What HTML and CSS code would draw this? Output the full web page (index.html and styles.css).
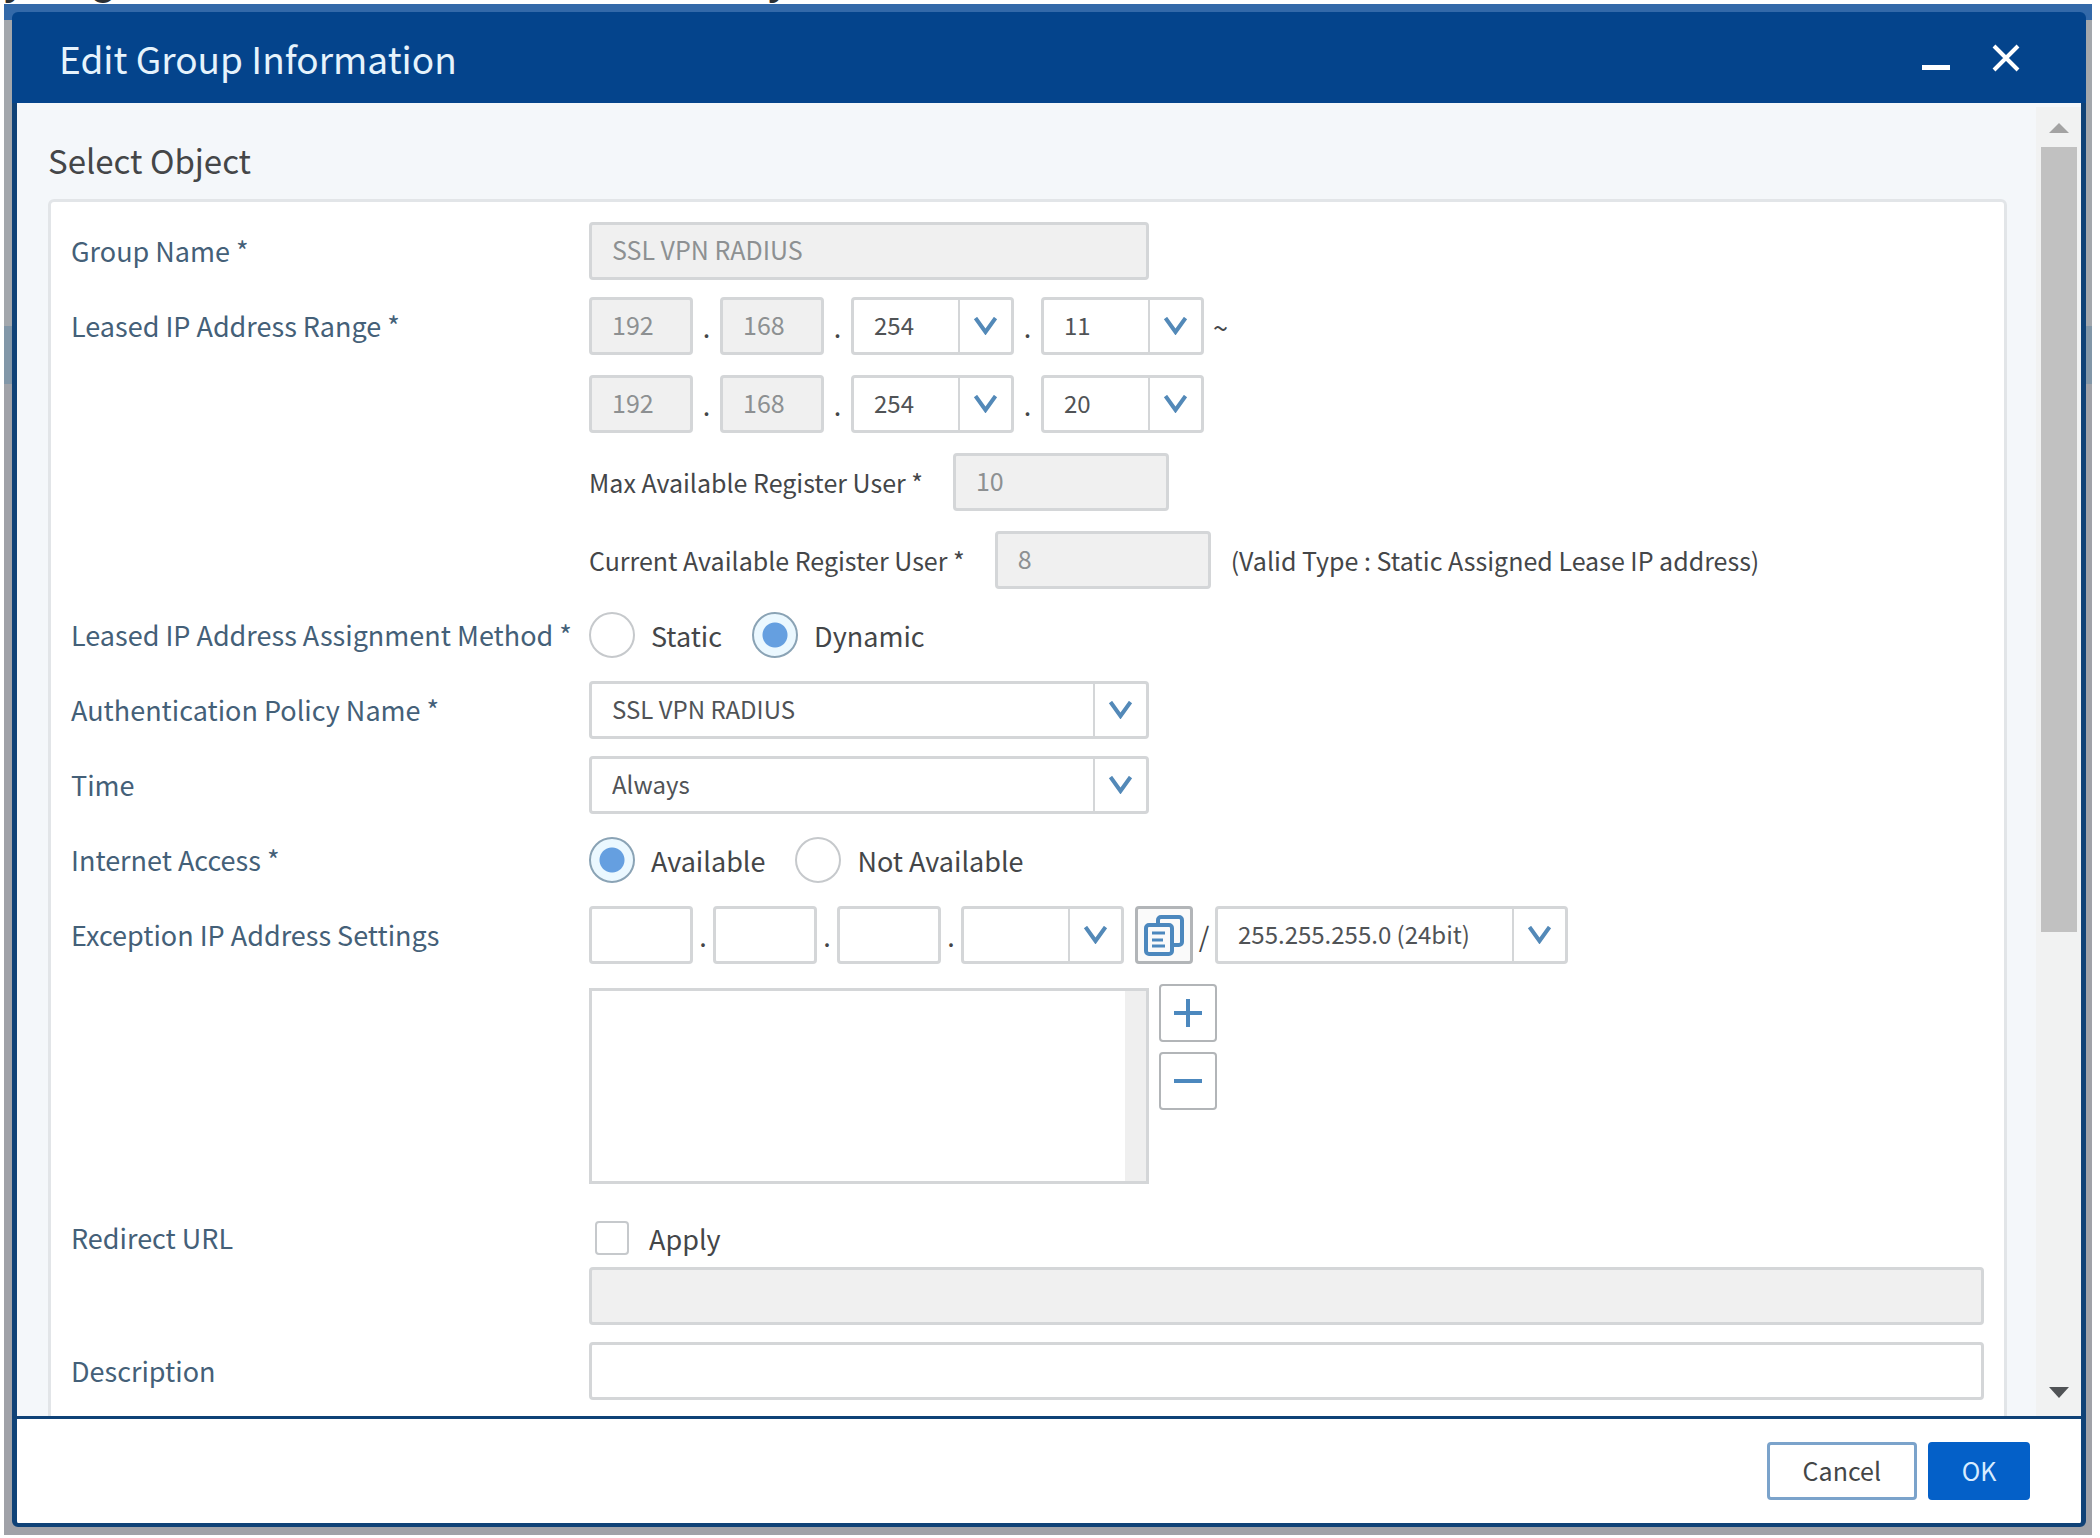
FILE: index.html
```html
<!DOCTYPE html>
<html lang="en">
<head>
    <meta charset="UTF-8">
    <meta name="viewport" content="width=device-width, initial-scale=1.0">
    <title>Edit Group Information</title>
    <link rel="stylesheet" href="styles.css">
</head>
<body>
    <svg class="sprite" aria-hidden="true">
        <symbol id="chevron" viewBox="0 0 24 18">
            <path d="M2 1 L12 15 L22 1" fill="none" stroke="currentColor" stroke-width="4"/>
        </symbol>
    </svg>

    <!-- Last line of the page text, scrolled almost out of view -->
    <div class="page-text" aria-hidden="true"><span>y</span><span>g</span><span>y</span></div>

    <div class="backdrop">
        <div class="dialog" role="dialog" aria-labelledby="dialogTitle">
            <header class="dialog-header">
                <h1 id="dialogTitle" class="dialog-title">Edit Group Information</h1>
                <div class="window-buttons">
                    <button type="button" class="window-button" aria-label="Minimize">
                        <svg width="28" height="28" viewBox="0 0 28 28"><path d="M0 23.5h28" stroke="currentColor" stroke-width="5"/></svg>
                    </button>
                    <button type="button" class="window-button" aria-label="Close">
                        <svg width="28" height="28" viewBox="0 0 28 28"><path d="M2 2l24 24M26 2L2 26" stroke="currentColor" stroke-width="4"/></svg>
                    </button>
                </div>
            </header>

            <div class="dialog-body">
                <main class="content">
                    <h2 class="section-title">Select Object</h2>
                    <form class="panel" id="groupForm">
                        <div class="row">
                            <label class="row-label" for="groupName">Group Name *</label>
                            <input class="field field-wide" id="groupName" type="text" value="SSL VPN RADIUS" disabled>
                        </div>

                        <div class="row">
                            <label class="row-label" for="start3">Leased IP Address Range *</label>
                            <div class="stack">
                                <div class="line">
                                    <input class="field octet" type="text" value="192" aria-label="Start octet 1" disabled>
                                    <span class="dot">.</span>
                                    <input class="field octet" type="text" value="168" aria-label="Start octet 2" disabled>
                                    <span class="dot">.</span>
                                    <span class="select octet-select"><select id="start3"><option>254</option></select><svg class="chevron"><use href="#chevron"/></svg></span>
                                    <span class="dot">.</span>
                                    <span class="select octet-select"><select aria-label="Start octet 4"><option>11</option></select><svg class="chevron"><use href="#chevron"/></svg></span>
                                    <span class="tilde">~</span>
                                </div>
                                <div class="line">
                                    <input class="field octet" type="text" value="192" aria-label="End octet 1" disabled>
                                    <span class="dot">.</span>
                                    <input class="field octet" type="text" value="168" aria-label="End octet 2" disabled>
                                    <span class="dot">.</span>
                                    <span class="select octet-select"><select aria-label="End octet 3"><option>254</option></select><svg class="chevron"><use href="#chevron"/></svg></span>
                                    <span class="dot">.</span>
                                    <span class="select octet-select"><select aria-label="End octet 4"><option>20</option></select><svg class="chevron"><use href="#chevron"/></svg></span>
                                </div>
                                <div class="line">
                                    <label class="sub-label" for="maxUser">Max Available Register User *</label>
                                    <input class="field count" id="maxUser" type="text" value="10" disabled>
                                </div>
                                <div class="line">
                                    <label class="sub-label" for="currentUser">Current Available Register User *</label>
                                    <input class="field count" id="currentUser" type="text" value="8" disabled>
                                    <span class="hint">(Valid Type : Static Assigned Lease IP address)</span>
                                </div>
                            </div>
                        </div>

                        <div class="row" role="radiogroup" aria-labelledby="methodLabel">
                            <span class="row-label" id="methodLabel">Leased IP Address Assignment Method *</span>
                            <div class="line options">
                                <label class="option"><input type="radio" name="method">Static</label>
                                <label class="option"><input type="radio" name="method" checked>Dynamic</label>
                            </div>
                        </div>

                        <div class="row">
                            <label class="row-label" for="policy">Authentication Policy Name *</label>
                            <span class="select field-wide"><select id="policy"><option>SSL VPN RADIUS</option></select><svg class="chevron"><use href="#chevron"/></svg></span>
                        </div>

                        <div class="row">
                            <label class="row-label" for="time">Time</label>
                            <span class="select field-wide"><select id="time"><option>Always</option></select><svg class="chevron"><use href="#chevron"/></svg></span>
                        </div>

                        <div class="row" role="radiogroup" aria-labelledby="accessLabel">
                            <span class="row-label" id="accessLabel">Internet Access *</span>
                            <div class="line options">
                                <label class="option"><input type="radio" name="access" checked>Available</label>
                                <label class="option"><input type="radio" name="access">Not Available</label>
                            </div>
                        </div>

                        <div class="row">
                            <label class="row-label" for="exception1">Exception IP Address Settings</label>
                            <div class="stack">
                                <div class="line">
                                    <input class="field octet" id="exception1" type="text">
                                    <span class="dot dot-narrow">.</span>
                                    <input class="field octet" type="text" aria-label="Exception octet 2">
                                    <span class="dot dot-narrow">.</span>
                                    <input class="field octet" type="text" aria-label="Exception octet 3">
                                    <span class="dot dot-narrow">.</span>
                                    <span class="select octet-select"><select aria-label="Exception octet 4"><option></option></select><svg class="chevron"><use href="#chevron"/></svg></span>
                                    <button type="button" class="icon-button copy-button" aria-label="Copy">
                                        <svg width="40" height="42" viewBox="0 0 40 42" fill="none" stroke="currentColor" stroke-width="4">
                                            <path d="M14 10V6a3 3 0 0 1 3-3H35a3 3 0 0 1 3 3V28a3 3 0 0 1-3 3H29"/>
                                            <rect x="2" y="11" width="26" height="29" rx="3"/>
                                            <path d="M8 19h13M8 26h11M8 32h13" stroke-width="3"/>
                                        </svg>
                                    </button>
                                    <span class="slash">/</span>
                                    <span class="select mask-select"><select aria-label="Subnet mask"><option>255.255.255.0 (24bit)</option></select><svg class="chevron"><use href="#chevron"/></svg></span>
                                </div>
                                <div class="line list-line">
                                    <textarea class="list" aria-label="Exception IP addresses"></textarea>
                                    <div class="list-buttons">
                                        <button type="button" class="icon-button" aria-label="Add">
                                            <svg width="30" height="30" viewBox="0 0 30 30"><path d="M15 1v28M1 15h28" stroke="currentColor" stroke-width="4"/></svg>
                                        </button>
                                        <button type="button" class="icon-button" aria-label="Remove">
                                            <svg width="30" height="30" viewBox="0 0 30 30"><path d="M1 15h28" stroke="currentColor" stroke-width="4"/></svg>
                                        </button>
                                    </div>
                                </div>
                            </div>
                        </div>

                        <div class="row">
                            <label class="row-label" for="redirectUrl">Redirect URL</label>
                            <div class="stack stack-tight">
                                <label class="option check"><input type="checkbox">Apply</label>
                                <input class="field" id="redirectUrl" type="text" disabled>
                            </div>
                        </div>

                        <div class="row">
                            <label class="row-label" for="description">Description</label>
                            <input class="field" id="description" type="text">
                        </div>
                    </form>
                </main>

                <div class="scrollbar" aria-hidden="true">
                    <svg class="scroll-up" width="20" height="10" viewBox="0 0 20 10"><path d="M10 0l10 10H0z" fill="currentColor"/></svg>
                    <div class="scroll-track"><div class="scroll-thumb"></div></div>
                    <svg class="scroll-down" width="20" height="11" viewBox="0 0 20 11"><path d="M0 0h20L10 11z" fill="currentColor"/></svg>
                </div>
            </div>

            <footer class="dialog-footer">
                <button type="button" class="button">Cancel</button>
                <button type="submit" form="groupForm" class="button button-primary">OK</button>
            </footer>
        </div>
    </div>
</body>
</html>
```

FILE: styles.css
```css
* {
    margin: 0;
    padding: 0;
    box-sizing: border-box;
}

body {
    display: flex;
    flex-direction: column;
    height: 100vh;
    padding: 0 8px 3px 4px;
    background-color: #ffffff;
    color: #444648;
    font-family: "Noto Sans CJK KR", "Noto Sans", sans-serif;
    font-size: 27px;
    overflow: hidden;
}

input, select, textarea, button {
    font: inherit;
    color: inherit;
}

.sprite {
    display: none;
}

.page-text {
    display: grid;
    grid-template-columns: 86px 678px 1fr;
    grid-template-rows: 4px;
    align-items: end;
    flex-shrink: 0;
    overflow: hidden;
    color: #2c2f33;
    font-family: "Liberation Sans", sans-serif;
    font-size: 48px;
    line-height: 54px;
}

.backdrop {
    flex: 1;
    min-height: 0;
    padding: 8px 6px 8px 8px;
    background: linear-gradient(#3369a9 16px, #a3a7ac 16px, #a3a7ac 322px, #8297a8 322px, #8297a8 380px, #a0a2a8 380px);
}

.dialog {
    display: flex;
    flex-direction: column;
    height: 100%;
}

/* Header */
.dialog-header {
    display: flex;
    align-items: center;
    justify-content: space-between;
    height: 91px;
    flex-shrink: 0;
    padding: 0 66px 0 47px;
    border-radius: 6px 6px 0 0;
    background-color: #04448c;
    color: #e6f3fc;
}

.dialog-title {
    font-size: 37px;
    font-weight: 400;
}

.window-buttons {
    display: flex;
    gap: 42px;
}

.window-button {
    display: flex;
    background: none;
    border: none;
    color: #ffffff;
}

/* Body */
.dialog-body {
    display: flex;
    flex: 1;
    min-height: 0;
    border: solid #0f4277;
    border-width: 0 5px;
    background-color: #f4f7fa;
}

.content {
    flex: 1;
    padding: 0 29px 0 31px;
    overflow: hidden;
}

.section-title {
    padding: 33px 0 15px;
    font-size: 33px;
    font-weight: 400;
    line-height: 48px;
}

.panel {
    display: flex;
    flex-direction: column;
    gap: 17px;
    padding: 20px 20px 40px;
    border: 3px solid #e2e5e8;
    border-radius: 6px;
    background-color: #ffffff;
}

.row {
    display: grid;
    grid-template-columns: 518px minmax(0, 1fr);
    align-items: start;
}

.row-label {
    color: #446078;
    line-height: 58px;
    white-space: nowrap;
}

.stack {
    display: flex;
    flex-direction: column;
    gap: 20px;
}

.stack-tight {
    gap: 0;
}

.line {
    display: flex;
    align-items: center;
    height: 58px;
}

.field {
    width: 100%;
    height: 58px;
    padding: 0 20px 4px;
    border: 3px solid #d4d6d8;
    border-radius: 4px;
    background-color: #ffffff;
    font-size: 25px;
}

.field:disabled {
    background-color: #f0f0f0;
    color: #8d9092;
}

.field-wide {
    width: 560px;
}

.octet {
    width: 104px;
}

.count {
    width: 216px;
}

.dot {
    width: 27px;
    text-align: center;
}

.dot-narrow {
    width: 20px;
}

.tilde {
    padding-left: 9px;
}

.sub-label {
    padding-right: 30px;
    font-size: 25px;
}

.hint {
    padding-left: 20px;
    font-size: 25px;
}

/* Drop-downs: the arrow cell lies over the right end of the select */
.select {
    display: grid;
    grid-template-columns: minmax(0, 1fr) 53px;
    height: 58px;
    border: 3px solid #d4d6d8;
    border-radius: 4px;
    background-color: #ffffff;
}

.select select {
    grid-area: 1 / 1 / 2 / 3;
    padding: 0 20px 4px;
    border: none;
    appearance: none;
    background: none;
    color: #505356;
    font-size: 24px;
}

.chevron {
    grid-area: 1 / 2 / 2 / 3;
    width: 100%;
    height: 100%;
    padding: 17px 13px;
    border-left: 2px solid #d4d6d8;
    color: #5389b8;
    pointer-events: none;
}

.octet-select {
    width: 163px;
}

.mask-select {
    width: 353px;
}

/* Radios and check box */
.options {
    gap: 30px;
}

.option {
    display: flex;
    align-items: center;
    gap: 16px;
}

.option input {
    width: 46px;
    height: 46px;
    border: 2px solid #c6c9cc;
    border-radius: 50%;
    appearance: none;
    background-color: #ffffff;
}

.option input[type="radio"]:checked {
    border-color: #8aa3b5;
    background: radial-gradient(circle, #659fe0 12px, #ebf8ff 13px);
}

.check {
    height: 58px;
    padding-left: 6px;
    gap: 20px;
}

.check input {
    width: 34px;
    height: 34px;
    border-radius: 4px;
}

/* Buttons beside fields */
.icon-button {
    display: flex;
    align-items: center;
    justify-content: center;
    width: 58px;
    height: 58px;
    border: 2px solid #b2b5b8;
    border-radius: 4px;
    background-color: #ffffff;
    color: #4c88be;
}

.copy-button {
    margin-left: 11px;
    border-width: 3px;
    background-color: #fafafa;
}

.slash {
    width: 22px;
    text-align: center;
}

.list-line {
    align-items: flex-start;
    height: auto;
    padding-bottom: 8px;
}

.list {
    width: 560px;
    height: 196px;
    margin-top: 4px;
    padding: 10px 40px 10px 20px;
    border: 3px solid #d4d6d8;
    background: linear-gradient(#efefef, #efefef) right / 21px 100% no-repeat #ffffff;
    resize: none;
}

.list-buttons {
    display: flex;
    flex-direction: column;
    gap: 10px;
    padding-left: 10px;
}

/* Scrollbar */
.scrollbar {
    display: flex;
    flex-direction: column;
    align-items: center;
    width: 45px;
    margin-top: 4px;
    padding: 16px 0 18px;
    background-color: #f1f2f2;
}

.scroll-up {
    color: #a3a3a3;
}

.scroll-down {
    color: #505356;
}

.scroll-track {
    flex: 1;
    padding: 14px 0;
}

.scroll-thumb {
    width: 36px;
    height: 64%;
    background-color: #c1c1c1;
}

/* Footer */
.dialog-footer {
    display: flex;
    align-items: center;
    justify-content: flex-end;
    gap: 11px;
    height: 111px;
    flex-shrink: 0;
    padding: 0 51px 0 20px;
    border: solid #0f4277;
    border-width: 3px 5px 4px;
    border-radius: 0 0 6px 6px;
    background-color: #ffffff;
}

.button {
    min-width: 102px;
    height: 58px;
    padding: 0 33px 2px;
    border: 3px solid #7ba3cb;
    border-radius: 4px;
    background-color: #ffffff;
    font-size: 25px;
}

.button-primary {
    padding: 0 30px 2px;
    border-color: #0460c8;
    background-color: #0460c8;
    color: #d8ecff;
}
```
